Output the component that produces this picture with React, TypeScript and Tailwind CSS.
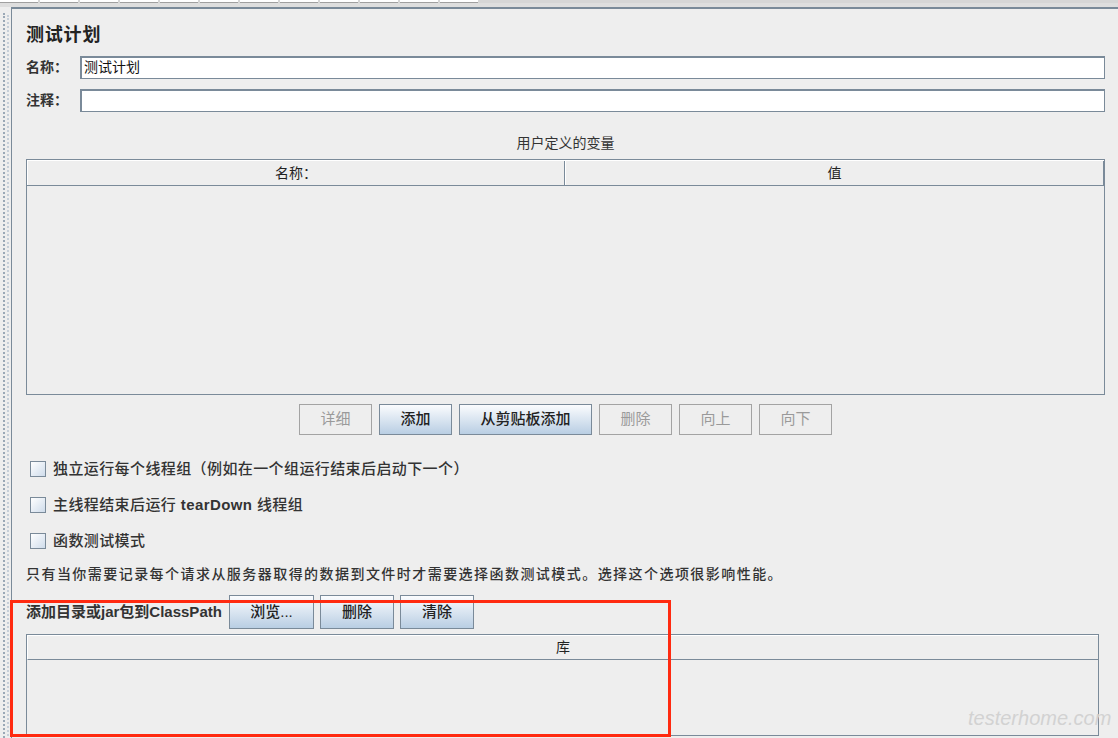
import React from "react";

const FONT = { fontFamily: '"Liberation Sans", "Noto Sans CJK SC", sans-serif' };

function Btn({ label, enabled, w }: { label: string; enabled: boolean; w: string }) {
  if (enabled) {
    return (
      <div
        className={`${w} h-full flex items-center justify-center border border-[#7a8a99] bg-gradient-to-b from-[#fbfcfe] to-[#b9cee3] text-[15px] font-medium text-[#222]`}
      >
        {label}
      </div>
    );
  }
  return (
    <div
      className={`${w} h-full flex items-center justify-center border border-[#a3a3a3] text-[15px] text-[#9a9a9a]`}
    >
      {label}
    </div>
  );
}

function Check({ children }: { children: React.ReactNode }) {
  return (
    <div className="h-[36px] flex items-center pl-[4px]">
      <div className="w-[16px] h-[16px] border border-[#7a8a99] bg-gradient-to-br from-[#ffffff] to-[#cfdceb] mr-[7px]" />
      <span className="text-[15px] font-medium text-[#333] tracking-[0.4px]">{children}</span>
    </div>
  );
}

export default function App() {
  return (
    <div style={FONT} className="w-[1118px] h-[738px] bg-[#eeeeee] relative overflow-hidden flex flex-col">
      {/* top tab strip */}
      <div className="h-[7px] flex flex-col shrink-0">
        <div className="h-[3px] flex bg-[#d6d6d6]">
          {[0, 1, 2, 3, 4, 5, 6, 7, 8, 9, 10, 11].map((i) => (
            <div key={i} className="w-[38px] h-full bg-white mr-[2px] border-b border-[#a0a0a0]" />
          ))}
        </div>
        <div className="h-[4px] bg-[#dedede]" />
      </div>
      <div className="flex-1 flex min-h-0">
        <div className="w-[11px] shrink-0 flex pt-[6px] pl-[3px] gap-[2px]">
          <div className="h-full border-l-2 border-dotted border-[#9aa8b6]" />
          <div className="h-full border-l-2 border-dotted border-[#c5ced8] mt-[2px]" />
        </div>
        <div className="flex-1 border-l border-t-2 border-[#7a8a99] pl-[14px] pr-[13px] pt-[14px] flex flex-col">
          <div className="h-[24px] text-[18px] font-bold text-[#222] leading-[24px] tracking-[0.8px]">测试计划</div>
          <div className="mt-[9px] flex items-center h-[23px]">
            <div className="w-[54px] text-[14px] font-semibold text-[#333]">名称：</div>
            <div className="flex-1 h-full bg-white border-t-2 border-l-2 border-[#7a8a99] border-r border-b border-r-[#7a8a99] border-b-[#7a8a99] text-[14px] leading-[19px] pl-[2px] text-[#111]">
              测试计划
            </div>
          </div>
          <div className="mt-[10px] flex items-center h-[23px]">
            <div className="w-[54px] text-[14px] font-semibold text-[#333]">注释：</div>
            <div className="flex-1 h-full bg-white border-t-2 border-l-2 border-[#7a8a99] border-r border-b border-r-[#7a8a99] border-b-[#7a8a99]" />
          </div>
          <div className="mt-[21px] h-[20px] leading-[20px] text-center text-[14px] text-[#333]">用户定义的变量</div>
          <div className="mt-[6px] h-[236px] border border-[#7a8a99] flex flex-col">
            <div className="h-[26px] flex border-b border-[#7a8a99] border-t border-t-white">
              <div className="w-[538px] flex items-center justify-center text-[14px] text-[#222] border-r border-[#7a8a99] border-l border-l-white">
                名称：
              </div>
              <div className="flex-1 flex items-center justify-center text-[14px] text-[#222] border-l border-white border-r border-r-[#7a8a99]">
                值
              </div>
            </div>
            <div className="flex-1" />
          </div>
          <div className="mt-[9px] h-[31px] flex justify-center gap-[7px]">
            <Btn label="详细" enabled={false} w="w-[73px]" />
            <Btn label="添加" enabled={true} w="w-[73px]" />
            <Btn label="从剪贴板添加" enabled={true} w="w-[133px]" />
            <Btn label="删除" enabled={false} w="w-[73px]" />
            <Btn label="向上" enabled={false} w="w-[73px]" />
            <Btn label="向下" enabled={false} w="w-[73px]" />
          </div>
          <div className="mt-[16px] flex flex-col">
            <Check>独立运行每个线程组（例如在一个组运行结束后启动下一个）</Check>
            <Check>
              主线程结束后运行 <span className="font-bold">tearDown</span> 线程组
            </Check>
            <Check>函数测试模式</Check>
          </div>
          <div className="mt-[5px] h-[20px] leading-[20px] text-[14px] font-medium text-[#333] tracking-[1.45px]">
            只有当你需要记录每个请求从服务器取得的数据到文件时才需要选择函数测试模式。选择这个选项很影响性能。
          </div>
          <div className="mt-[11px] h-[34px] flex items-center">
            <div className="w-[203px] text-[15px] font-semibold text-[#333]">添加目录或jar包到ClassPath</div>
            <div className="h-full flex gap-[6px]">
              <Btn label="浏览..." enabled={true} w="w-[85px]" />
              <Btn label="删除" enabled={true} w="w-[74px]" />
              <Btn label="清除" enabled={true} w="w-[74px]" />
            </div>
          </div>
          <div className="mt-[5px] mr-[6px] h-[102px] border border-[#7a8a99] flex flex-col">
            <div className="h-[25px] flex items-center justify-center text-[14px] text-[#222] border-b border-[#7a8a99] border-t border-t-white border-l border-l-white">
              库
            </div>
            <div className="flex-1" />
          </div>
        </div>
      </div>
      {/* red annotation frame */}
      <div className="absolute left-[10px] top-[600px] w-[661px] h-[137px] border-[3px] border-[#ff2a10] pointer-events-none" />
      {/* watermark */}
      <div
        className="absolute left-[968px] top-[703px] text-[20px] italic text-[#d2d2d2] whitespace-nowrap"
        style={{ fontFamily: '"Liberation Sans", sans-serif', fontWeight: 300 }}
      >
        testerhome.com
      </div>
    </div>
  );
}
